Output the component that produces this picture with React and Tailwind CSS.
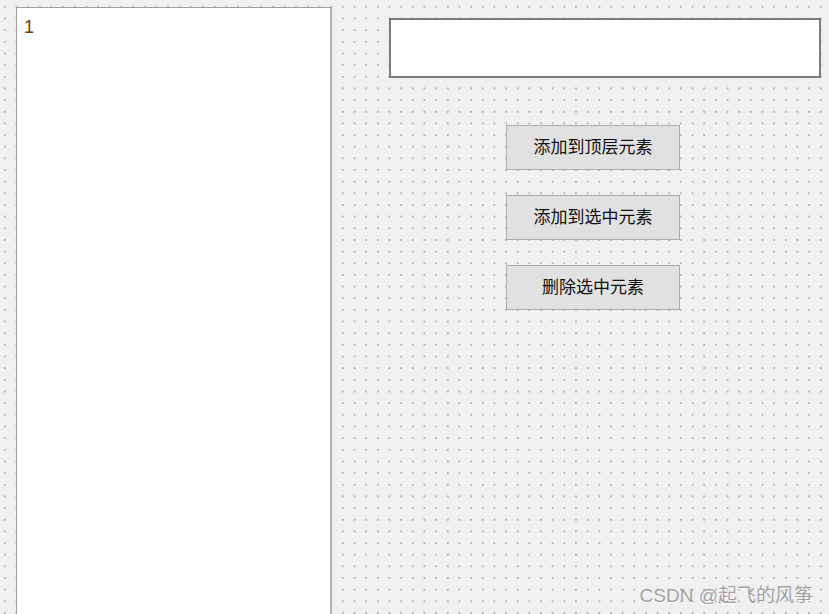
const BUTTONS = ["添加到顶层元素", "添加到选中元素", "删除选中元素"];

export default function App() {
  return (
    <div
      className="relative w-[829px] h-[614px] overflow-hidden bg-[#f0f0f0] bg-[radial-gradient(circle,#b8b8b8_0.8px,transparent_1.2px)] bg-[length:11.67px_11.67px] bg-[position:-1px_1px] flex items-start pl-[16px] pt-[7px]"
      style={{ fontFamily: '"Noto Sans CJK SC", "Noto Sans", sans-serif' }}
    >
      {/* tree / list panel */}
      <div className="w-[316px] h-[620px] shrink-0 bg-white border border-[#a0a0a0] border-r-2 border-r-[#b4b4b4] pl-[7px] pt-[9px]">
        <span
          className="block text-[18px] leading-[21px] text-[#6a4300]"
          style={{ fontFamily: '"Liberation Sans", Arial, sans-serif' }}
        >
          1
        </span>
      </div>

      <div className="ml-[57px] pt-[11px] w-[432px] flex flex-col">
        <input
          type="text"
          className="h-[60px] w-full bg-white border-2 border-[#7c7c7c] outline-none"
        />
        <div className="ml-[117px] mt-[47px] flex flex-col gap-[25px]">
          {BUTTONS.map((b) => (
            <button
              key={b}
              type="button"
              className="w-[174px] h-[45px] pb-[3px] bg-[#e1e1e1] border border-[#adadad] text-[17px] text-[#111111] flex items-center justify-center"
            >
              {b}
            </button>
          ))}
        </div>
      </div>

      <div
        className="absolute right-[16px] bottom-[6px] text-[19px] text-[#a2a2a2] leading-[24px] [text-shadow:0_1px_0_#ffffff]"
        style={{ fontFamily: '"Liberation Sans", "Noto Sans CJK SC", sans-serif' }}
      >
        CSDN @起飞的风筝
      </div>
    </div>
  );
}
